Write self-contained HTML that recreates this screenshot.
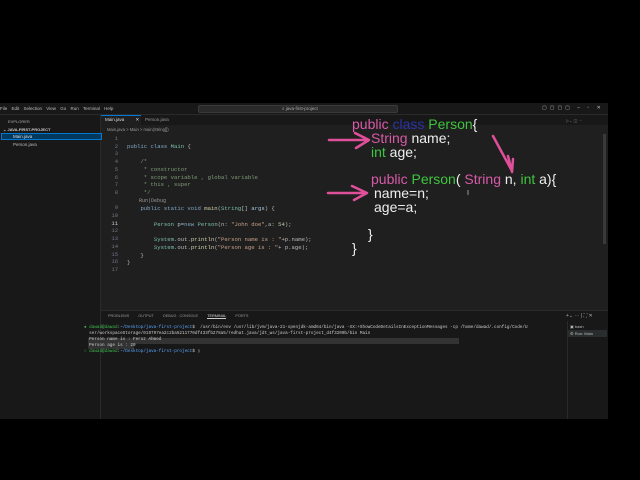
<!DOCTYPE html>
<html><head><style>
*{margin:0;padding:0;box-sizing:border-box}
body{width:640px;height:480px;background:#000;position:relative;overflow:hidden;font-family:"Liberation Sans",sans-serif}
.a{position:absolute}
.m{font-family:"Liberation Mono",monospace;font-size:5.6px;white-space:pre}
.ov{font-family:"Liberation Sans",sans-serif;font-size:14px;color:#eee;white-space:pre;position:absolute}
.p{color:#d85aa8}.g{color:#3fc43f}.b{color:#2a33a8}
</style></head><body>
<div class="a" style="left:0;top:103px;width:608px;height:316px;background:#1f1f1f"></div>
<div class="a" style="left:0;top:103px;width:608px;height:12px;background:#181818;border-bottom:1px solid #2a2a2a"></div>
<div class="a" style="left:0;top:106px;font-size:4.5px;color:#bbb;word-spacing:3px">File Edit Selection View Go Run Terminal Help</div>
<div class="a" style="left:198px;top:105px;width:200px;height:8px;background:#2a2a2a;border:1px solid #3a3a3a;border-radius:2px"></div>
<div class="a" style="left:282px;top:106px;font-size:4.5px;color:#aaa">⌕ java-first-project</div>
<div class="a" style="left:542px;top:105px;font-size:5px;color:#bbb;letter-spacing:3px">▢▢▢▢ – ▫ ✕</div>
<div class="a" style="left:0;top:115px;width:101px;height:304px;background:#181818;border-right:1px solid #2a2a2a"></div>
<div class="a" style="left:8px;top:119px;font-size:4px;color:#aaa">EXPLORER</div>
<div class="a" style="left:3px;top:127px;font-size:4px;color:#ccc;font-weight:bold">⌄ JAVA-FIRST-PROJECT</div>
<div class="a" style="left:1px;top:133px;width:101px;height:7px;background:#04395e;border:1px solid #0078d4"></div>
<div class="a" style="left:13px;top:134px;font-size:4.5px;color:#ddd">Main.java</div>
<div class="a" style="left:13px;top:142px;font-size:4.5px;color:#bbb">Person.java</div>
<div class="a" style="left:101px;top:115px;width:507px;height:10px;background:#181818"></div>
<div class="a" style="left:101px;top:115px;width:40px;height:10px;background:#1f1f1f;border-top:1px solid #0078d4"></div>
<div class="a" style="left:105px;top:117px;font-size:4.5px;color:#ddd">Main.java &nbsp;&nbsp;&nbsp;&nbsp;&nbsp;&nbsp;&nbsp;&nbsp;✕</div>
<div class="a" style="left:145px;top:117px;font-size:4.5px;color:#999">Person.java</div>
<div class="a" style="left:107px;top:127px;font-size:4.2px;color:#999">Main.java &gt; Main &gt; main(String[])</div>
<div class="a m" style="left:108px;top:135px;line-height:7.7px;color:#6e7681">  1
  2
  3
  4
  5
  6
  7
  8

  9
 10
<span style="color:#ccc"> 11</span>
 12
 13
 14
 15
 16
 17</div>
<div class="a m" style="left:127px;top:135px;line-height:7.7px;color:#bbb"><span> </span>
<span style="color:#7fa8c8">public class</span> <span style="color:#7fbfb0">Main</span> {

    <span style="color:#7f9a78">/*</span>
<span style="color:#7f9a78">     * constructor</span>
<span style="color:#7f9a78">     * scope variable , global variable</span>
<span style="color:#7f9a78">     * this , super</span>
<span style="color:#7f9a78">     */</span>
<span style="color:#999;font-size:5px">    Run|Debug</span>
    <span style="color:#7fa8c8">public static void</span> <span style="color:#cfcfa8">main</span>(<span style="color:#7fbfb0">String</span>[] <span style="color:#a8c8e0">args</span>) {

        <span style="color:#7fbfb0">Person</span> <span style="color:#a8c8e0">p</span>=<span style="color:#7fa8c8">new</span> <span style="color:#7fbfb0">Person</span>(n: <span style="color:#c8a088">"John doe"</span>,a: <span style="color:#b5cea8">54</span>);

        <span style="color:#7fbfb0">System</span>.out.<span style="color:#cfcfa8">println</span>(<span style="color:#c8a088">"Person name is : "</span>+p.name);
        <span style="color:#7fbfb0">System</span>.out.<span style="color:#cfcfa8">println</span>(<span style="color:#c8a088">"Person age is : "</span>+ p.age);
    }
}
</div>
<div class="a" style="left:566px;top:118px;width:30px;height:28px;"><div style="font-size:4px;color:#777">▷⌄ ◫ ⋯</div></div>
<div class="a" style="left:603px;top:134px;width:3px;height:110px;background:#3a3a3a"></div>
<div class="ov" style="left:352px;top:116px"><span class="p">public</span> <span class="b">class</span> <span class="g">Person</span>{</div>
<div class="ov" style="left:371px;top:130px"><span class="p">String</span> name;</div>
<div class="ov" style="left:371px;top:144px"><span class="g">int</span> age;</div>
<div class="ov" style="left:371px;top:171px"><span class="p">public</span> <span class="g">Person</span>( <span class="p">String</span> n, <span class="g">int</span> a){</div>
<div class="ov" style="left:374px;top:185px">name=n;</div>
<div class="ov" style="left:374px;top:199px">age=a;</div>
<div class="ov" style="left:368px;top:226px">}</div>
<div class="ov" style="left:352px;top:240px">}</div>
<div class="a" style="left:467px;top:190px;font-size:7px;color:#ccc">I</div>
<svg class="a" style="left:0;top:0" width="640" height="480">
<g stroke="#e0509a" stroke-width="2.5" fill="none" stroke-linecap="round" stroke-linejoin="round">
<path d="M329 140 L368 140 M355 133 L369 140 L356 148"/>
<path d="M328 193 L366 193 M352 186 L367 193 L354 200"/>
<path d="M493 136 L512 171 M508 156 L512 172 L513 159"/>
</g></svg>
<div class="a" style="left:101px;top:310px;width:507px;height:109px;background:#181818;border-top:1px solid #2a2a2a"></div>
<div class="a" style="left:108px;top:314px;font-size:3.8px;color:#999;word-spacing:2px">PROBLEMS &nbsp; OUTPUT &nbsp; DEBUG CONSOLE &nbsp; <span style="color:#ddd;border-bottom:1px solid #ccc">TERMINAL</span> &nbsp; PORTS</div>
<div class="a" style="left:566px;top:313px;font-size:5px;color:#aaa">+⌄ ⋯ | ⛶ ✕</div>
<div class="a" style="left:567px;top:321px;width:41px;height:98px;border-left:1px solid #2a2a2a"></div>
<div class="a" style="left:568px;top:330px;width:39px;height:7px;background:#2a2d2e"></div>
<div class="a" style="left:570px;top:323px;font-size:4px;color:#bbb;line-height:7px">▣ bash<br>⚙ Run: Main</div>
<div class="a" style="left:88px;top:338px;width:371px;height:6px;background:#333"></div>
<div class="a" style="left:88px;top:344px;width:46px;height:5px;background:#333"></div>
<div class="a m" style="left:84px;top:325px;line-height:6.1px;font-size:4.3px;color:#ccc"><span style="color:#3fb950">● dawad@dawad</span>:<span style="color:#58a6ff">~/Desktop/java-first-project</span>$  /usr/bin/env /usr/lib/jvm/java-21-openjdk-amd64/bin/java -XX:+ShowCodeDetailsInExceptionMessages -cp /home/dawad/.config/Code/U
  ser/workspaceStorage/019797ea2c2ba5211770df433fb278a5/redhat.java/jdt_ws/java-first-project_d4f3200b/bin Main
  Person name is : Feroz Ahmed
  Person age is : 29
<span style="color:#3fb950">○ dawad@dawad</span>:<span style="color:#58a6ff">~/Desktop/java-first-project</span>$ ▯</div>
</body></html>
